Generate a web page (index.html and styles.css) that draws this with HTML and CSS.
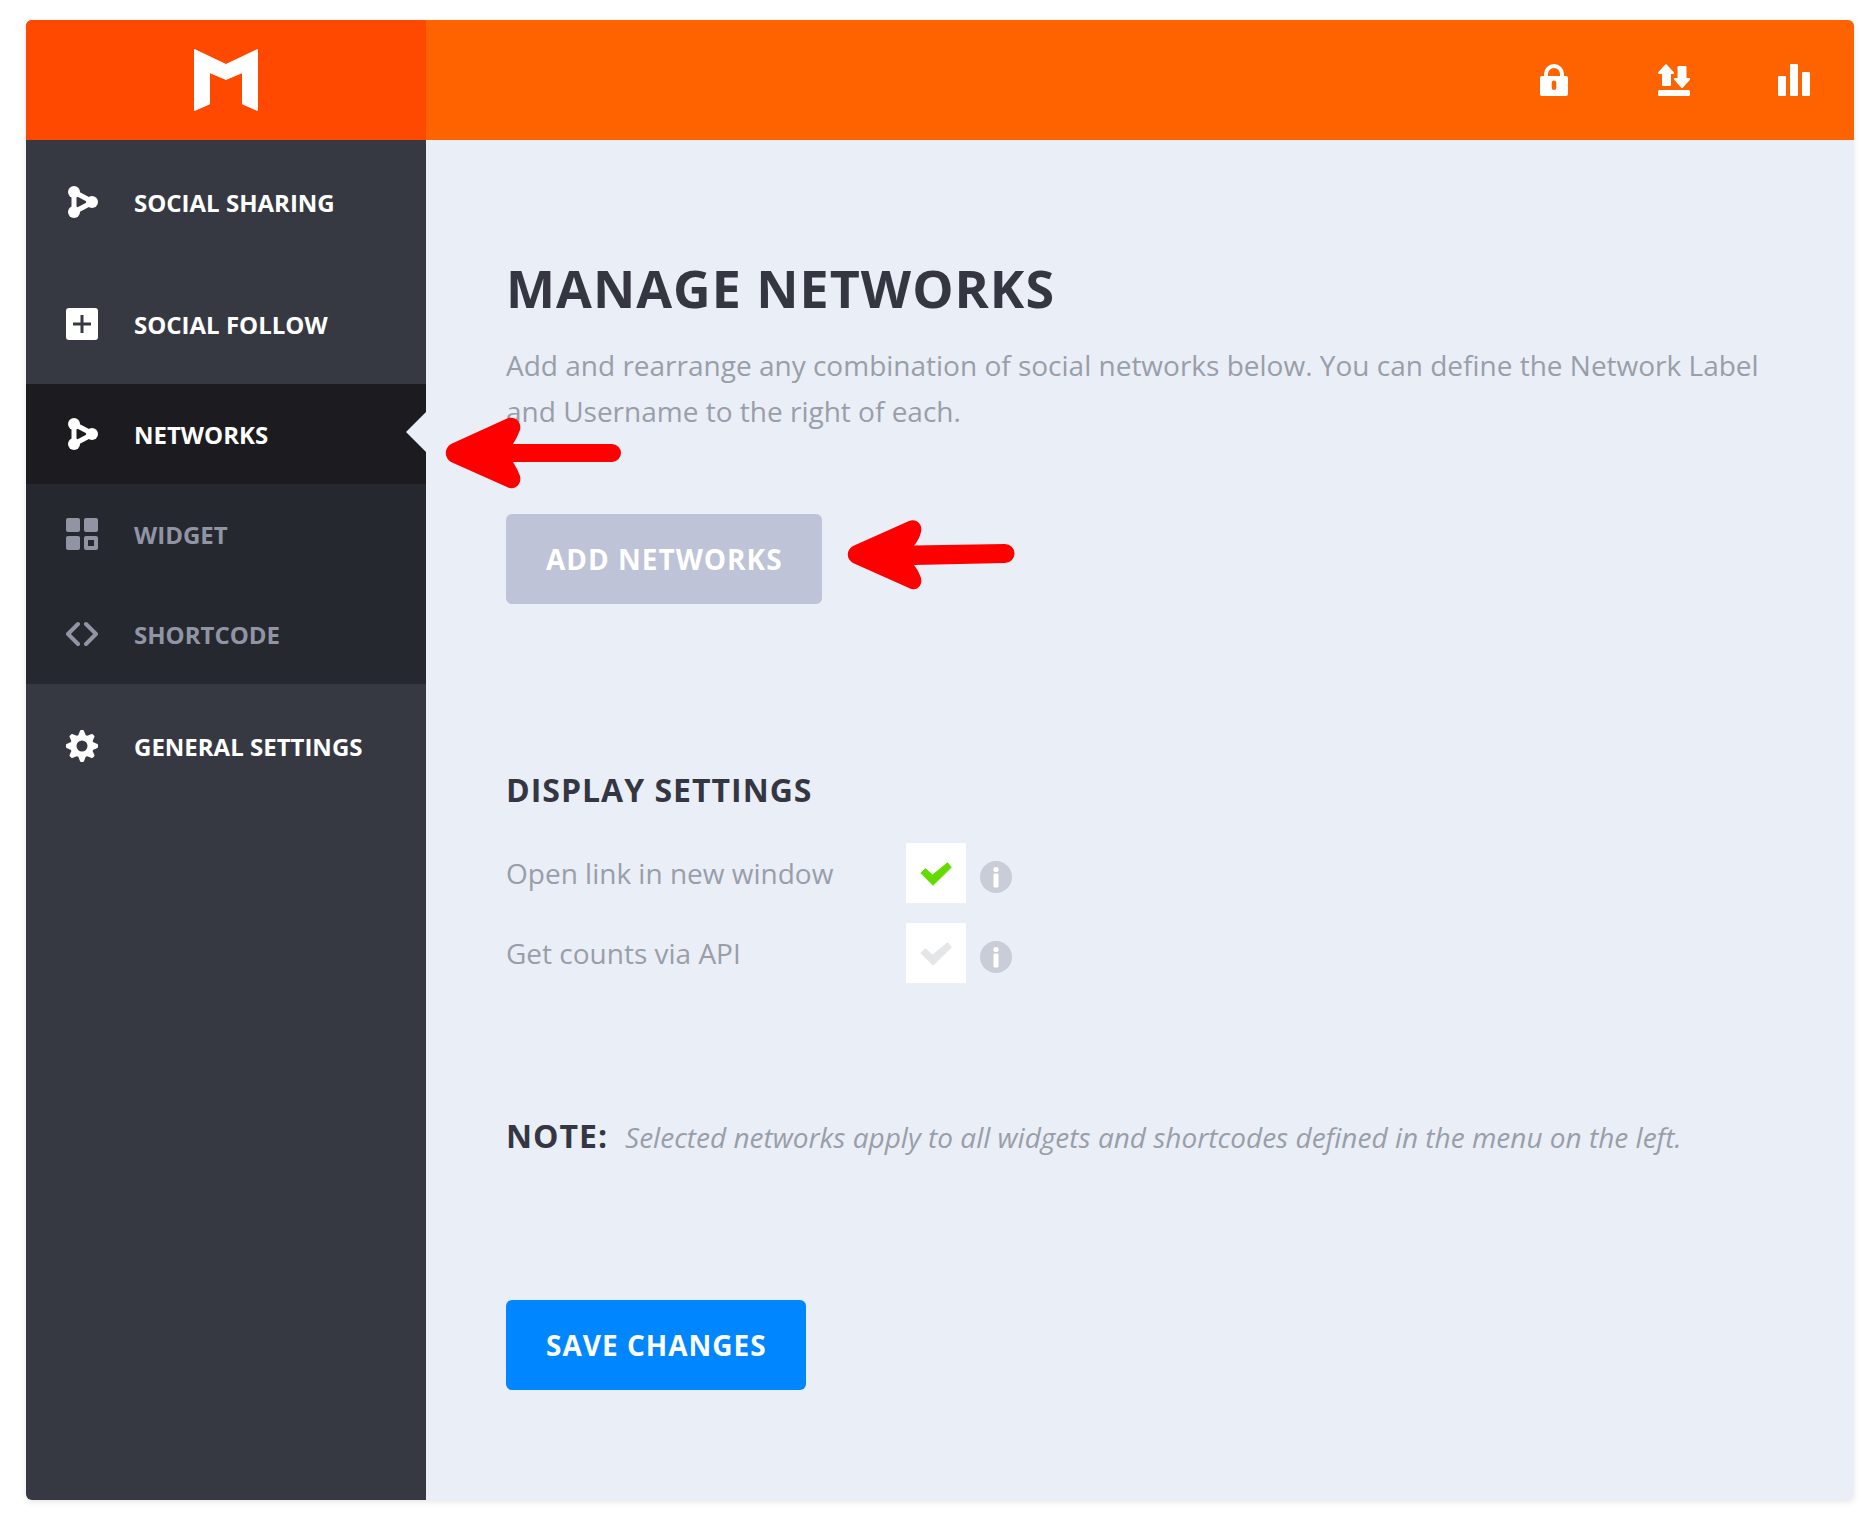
FILE: index.html
```html
<!DOCTYPE html>
<html lang="en">
<head>
<meta charset="utf-8">
<meta name="viewport" content="width=device-width, initial-scale=1">
<title>Manage Networks</title>
<link rel="stylesheet" href="styles.css">
</head>
<body>
<svg class="defs" aria-hidden="true">
  <symbol id="share" viewBox="0 0 32 32">
    <path fill="none" stroke="currentColor" stroke-width="5" stroke-linejoin="round" d="M8 6v20l19-10z"/>
    <circle cx="8" cy="6" r="6" fill="currentColor"/>
    <circle cx="8" cy="26" r="6" fill="currentColor"/>
    <circle cx="26" cy="16" r="6" fill="currentColor"/>
  </symbol>
  <symbol id="info" viewBox="0 0 32 32">
    <circle cx="16" cy="16" r="16" fill="#c9cdd8"/>
    <circle cx="16" cy="8.500" r="2.600" fill="#fff"/>
    <rect x="13.500" y="12.500" width="5" height="14" rx="1" fill="#fff"/>
  </symbol>
  <symbol id="tick" viewBox="0 0 32 24">
    <path fill="currentColor" stroke="currentColor" stroke-linejoin="round" d="M.800 11 5.500 6.800 12.500 13 27.500.800 31.300 5.300 13 23.300z"/>
  </symbol>
</svg>
<div class="panel">
  <header class="topbar">
    <a class="logo" href="#" aria-label="Home">
      <svg width="64" height="62" viewBox="0 0 64 62"><path fill="#fff" stroke="#fff" stroke-width="1" stroke-linejoin="round" d="M.500.500 32 15.500 63.500.500v61L48.500 55V23.500L32 30.500 15.500 23.500V55L.500 61.500z"/></svg>
    </a>
    <nav class="tools" aria-label="Tools">
      <a href="#" aria-label="Authorization"><svg width="32" height="32" viewBox="0 0 32 32"><path fill="none" stroke="#fff" stroke-width="4" d="M8 14v-4a8 8 0 0 1 16 0v4"/><path fill="#fff" fill-rule="evenodd" d="M4 12h24q2 0 2 2v16q0 2-2 2H4q-2 0-2-2V14q0-2 2-2zm12 4.500a2.300 2.300 0 0 0-2.300 2.300v5a2.300 2.300 0 0 0 4.600 0v-5A2.300 2.300 0 0 0 16 16.500z"/></svg></a>
      <a href="#" aria-label="Import and export"><svg width="32" height="32" viewBox="0 0 32 32"><g fill="#fff" stroke="#fff" stroke-width="2" stroke-linejoin="round"><path d="M8 1.200 15 9h-3v12H5V9H1z"/><path d="M20.500 3h7v12h3.800L24 23 17 15h3.500z"/></g><rect y="26" width="32" height="6" rx="1.500" fill="#fff"/></svg></a>
      <a href="#" aria-label="Statistics"><svg width="32" height="32" viewBox="0 0 32 32" fill="#fff"><rect y="12" width="8" height="20" rx="1"/><rect x="12" width="8" height="32" rx="1"/><rect x="24" y="8" width="8" height="24" rx="1"/></svg></a>
    </nav>
  </header>
  <div class="body">
    <nav class="sidebar" aria-label="Settings">
      <a class="item" href="#"><svg class="icon"><use href="#share"/></svg>SOCIAL SHARING</a>
      <a class="item" href="#"><svg class="icon" viewBox="0 0 32 32"><path fill="currentColor" fill-rule="evenodd" d="M3 0h26q3 0 3 3v26q0 3-3 3H3q-3 0-3-3V3q0-3 3-3zm11.500 7v7.500H7v3h7.500V25h3v-7.500H25v-3h-7.500V7z"/></svg>SOCIAL FOLLOW</a>
      <div class="submenu">
        <a class="subitem current" href="#" aria-current="page"><svg class="icon"><use href="#share"/></svg>NETWORKS
          <svg class="arrow arrow-menu" width="176" height="72" viewBox="0 0 176 72" aria-hidden="true"><path fill="#fe0000" d="M5 27 61 1.500C69 -1.500 76 5 74 13Q71 21 67 27H166A9 9 0 0 1 166 45H67Q71 51 74 59C76 67 69 74 61 70L5 45C-2 41-2 31 5 27z"/></svg>
        </a>
        <a class="subitem" href="#"><svg class="icon" viewBox="0 0 32 32" fill="currentColor"><rect width="14" height="14" rx="2"/><rect x="18" width="14" height="14" rx="2"/><rect y="18" width="14" height="14" rx="2"/><path fill-rule="evenodd" d="M20 18h10q2 0 2 2v10q0 2-2 2H20q-2 0-2-2V20q0-2 2-2zm2 4v6h6v-6z"/></svg>WIDGET</a>
        <a class="subitem" href="#"><svg class="icon" viewBox="0 0 32 32"><path fill="none" stroke="currentColor" stroke-width="4" stroke-linecap="round" stroke-linejoin="round" d="M12 6 2 16 12 26M20 6l10 10L20 26"/></svg>SHORTCODE</a>
      </div>
      <a class="item" href="#"><svg class="icon" viewBox="0 0 32 32"><path fill="currentColor" stroke="currentColor" stroke-width="2" stroke-linejoin="round" fill-rule="evenodd" d="M15 1h2l2 5 2 1 5-2 1.500 1.500L25.500 11l1 2 4.500 2v2l-4.500 2-1 2 2 4.500L26 27l-5-2-2 1-2 5h-2l-2-5-2-1-5 2-1.500-1.500L6.500 21l-1-2L1 17v-2l4.500-2 1-2-2-4.500L6 5l5 2 2-1zM16 9.500a6.500 6.500 0 1 0 0 13 6.500 6.500 0 1 0 0-13z"/></svg>GENERAL SETTINGS</a>
    </nav>
    <main class="content">
      <h1>MANAGE NETWORKS</h1>
      <p class="intro">Add and rearrange any combination of social networks below. You can define the Network Label and Username to the right of each.</p>
      <div class="add">
        <button class="btn btn-muted" type="button">ADD NETWORKS</button>
        <svg class="arrow arrow-add" width="168" height="70" viewBox="0 0 168 70" aria-hidden="true"><path fill="#fe0000" d="M5 26 61 1C69-2 75 5 73 12Q71 20 66 25.500L157 24A9.500 9.500 0 0 1 157 43L66 45Q71 51 73 58C75 66 68 72 61 68L5 43C-2 39-2 30 5 26z"/></svg>
      </div>
      <h2>DISPLAY SETTINGS</h2>
      <div class="option">
        <label for="new-window">Open link in new window</label>
        <span class="check"><input id="new-window" type="checkbox" checked><svg width="32" height="24"><use href="#tick"/></svg></span>
        <svg class="info" aria-hidden="true"><use href="#info"/></svg>
      </div>
      <div class="option">
        <label for="api-counts">Get counts via API</label>
        <span class="check"><input id="api-counts" type="checkbox"><svg width="32" height="24"><use href="#tick"/></svg></span>
        <svg class="info" aria-hidden="true"><use href="#info"/></svg>
      </div>
      <p class="note"><strong>NOTE:</strong><em>Selected networks apply to all widgets and shortcodes defined in the menu on the left.</em></p>
      <button class="btn btn-primary" type="submit">SAVE CHANGES</button>
    </main>
  </div>
</div>
</body>
</html>
```
FILE: styles.css
```css
* { box-sizing: border-box; }

body {
  margin: 0;
  padding: 20px 20px 34px 26px;
  background: #fff;
  color: #343741;
  font-family: "Open Sans", sans-serif;
}

a { color: inherit; text-decoration: none; }
.defs { display: none; }

.panel {
  display: flex;
  flex-direction: column;
  min-height: calc(100vh - 54px);
  border-radius: 6px;
  background: #eaeef6;
  box-shadow: 0 2px 6px rgba(0, 0, 0, .1);
}

.topbar {
  display: flex;
  height: 120px;
  border-radius: 6px 6px 0 0;
  background: #ff6300;
  overflow: hidden;
}

.logo {
  display: flex;
  align-items: center;
  justify-content: center;
  width: 400px;
  background: #ff4800;
}

.tools { display: flex; margin-left: auto; }
.tools a {
  display: flex;
  align-items: center;
  justify-content: center;
  width: 120px;
}

.body { display: flex; flex: 1; }

.sidebar {
  flex: 0 0 400px;
  border-radius: 0 0 0 6px;
  background: #373942;
  color: #fff;
  font-size: 24px;
  font-weight: 700;
}

.item, .subitem {
  display: flex;
  align-items: center;
  gap: 36px;
  height: 122px;
  padding: 2px 40px 0;
}
.subitem { position: relative; height: 100px; padding-top: 0; }

.icon { width: 32px; height: 32px; }

.submenu { background: #262830; color: #9195a3; }
.current { background: #1b1b20; color: #fff; }

.current::after {
  content: "";
  position: absolute;
  top: 28px;
  right: 0;
  border: 20px solid transparent;
  border-left: 0;
  border-right-color: #eaeef6;
}

.arrow { position: absolute; z-index: 1; overflow: visible; }
.arrow-menu { left: 420px; top: 33px; }
.arrow-add { left: 342px; top: 6px; }

.content {
  flex: 1;
  padding: 112px 80px 110px;
  font-size: 28px;
  line-height: 46px;
}

h1, h2, p { margin: 0; }
h1 { font-size: 52px; line-height: 72px; letter-spacing: 1px; }
h2 { margin-bottom: 30px; font-size: 32px; line-height: 46px; letter-spacing: 1px; }

.intro { margin: 18px 0 80px; color: #999ea9; }

.add { position: relative; margin-bottom: 163px; }

.btn {
  display: block;
  height: 90px;
  padding: 0 39px 0 40px;
  border: 0;
  border-radius: 6px;
  color: #fff;
  font: 700 28px "Open Sans", sans-serif;
  letter-spacing: 1px;
}
.btn-muted { background: #bec3d7; }
.btn-primary { background: #0087ff; }

.option {
  display: flex;
  align-items: center;
  height: 60px;
  margin-bottom: 20px;
  color: #999ea9;
}
.option label { width: 400px; }

.check {
  display: grid;
  place-items: center;
  width: 60px;
  height: 60px;
}
.check > * { grid-area: 1 / 1; }
.check input {
  appearance: none;
  width: 60px;
  height: 60px;
  margin: 0;
  background: #fff;
}
.check svg { z-index: 1; margin-top: 2px; color: #e4e5e7; pointer-events: none; }
.check input:checked + svg { color: #63db00; }

.info { width: 32px; height: 32px; margin: 8px 0 0 14px; }

.note { margin: 130px 0 140px; }
.note strong {
  margin-right: 17px;
  font-size: 32px;
  font-weight: 700;
  letter-spacing: 1px;
}
.note em { color: #999ea9; }
```
